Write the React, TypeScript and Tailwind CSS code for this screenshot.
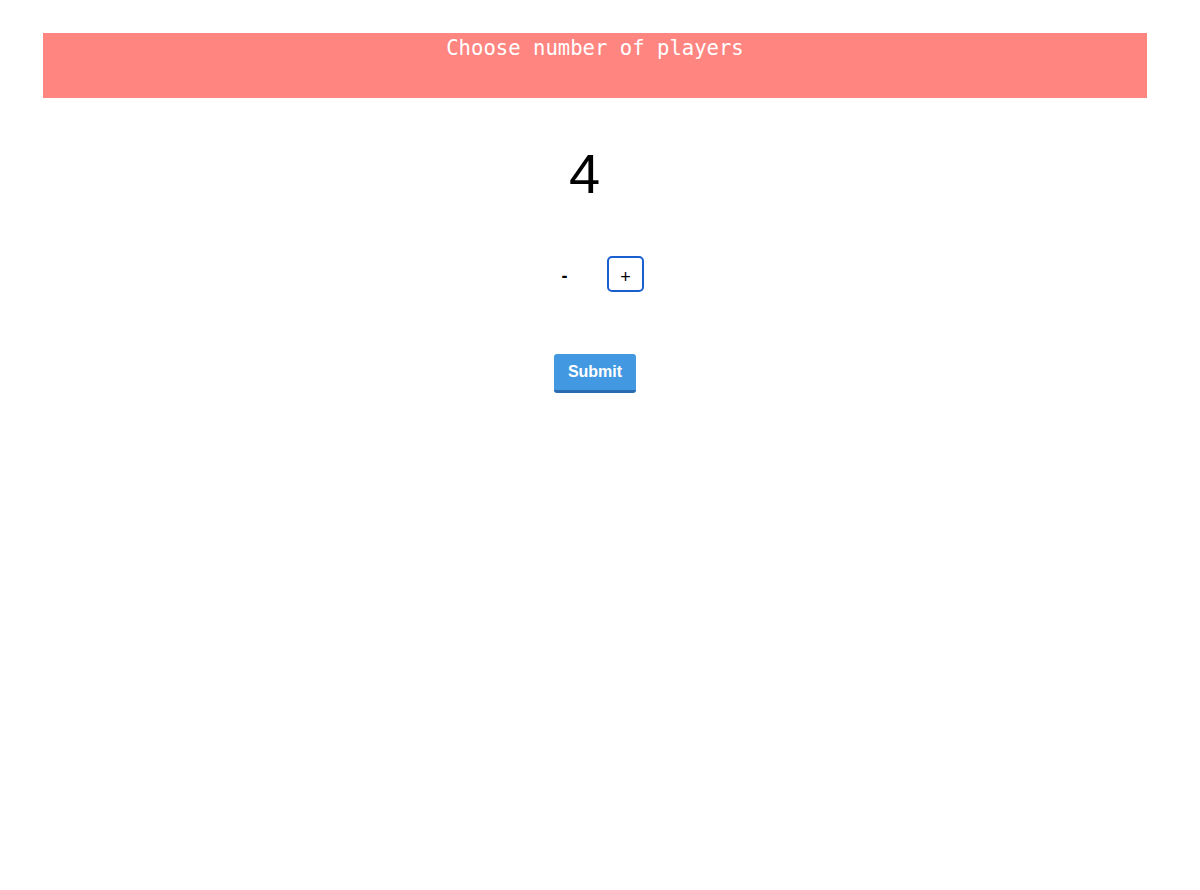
export default function App() {
  return (
    <div className="w-[1200px] h-[890px] bg-white pl-[43px] pr-[53px] pt-[33px]" style={{ fontFamily: '"Liberation Sans", Arial, sans-serif' }}>
      <div className="h-[65px] bg-[#ff8581] flex justify-center">
        <h1 className="text-white text-[20.6px] leading-[30px]" style={{ fontFamily: '"DejaVu Sans Mono", monospace' }}>
          Choose number of players
        </h1>
      </div>
      <div className="flex justify-center pt-[44px]">
        <div className="text-[56px] leading-[64px] text-black mr-[21px]">4</div>
      </div>
      <div className="flex justify-center gap-[24px] mt-[50px]">
        <button className="w-[37px] h-[36px] flex items-center justify-center text-[18px] font-bold text-black rounded-[5px] pt-[5px]">-</button>
        <button className="w-[37px] h-[36px] flex items-center justify-center text-[18px] text-black border-2 border-[#1a5fd0] rounded-[5px] pt-[6px]">+</button>
      </div>
      <div className="flex justify-center mt-[62px]">
        <button className="w-[82px] h-[39px] bg-[#4299e1] text-white font-bold text-[16px] rounded-[3px] border-b-[3px] border-[#2b6cb0] pb-[1px]">
          Submit
        </button>
      </div>
    </div>
  );
}
